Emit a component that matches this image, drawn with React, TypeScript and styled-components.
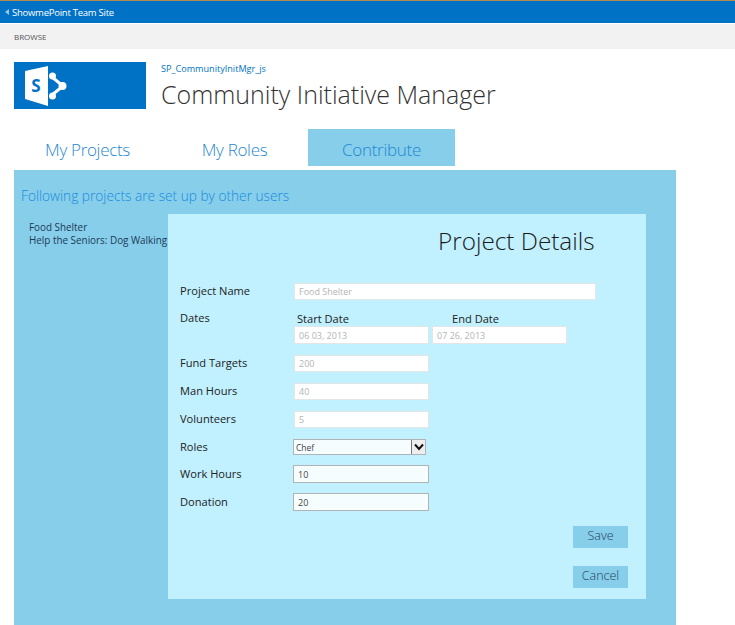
import React from 'react';
import styled, { createGlobalStyle } from 'styled-components';

const GlobalStyle = createGlobalStyle`
	html, body {
		margin: 0;
		padding: 0;
		background: #fff;
	}
	body {
		font-family: 'Open Sans', 'Noto Sans', sans-serif;
		overflow: hidden;
	}
`;

const Page = styled.div`
	width: 735px;
	height: 625px;
	overflow: hidden;
	display: flex;
	flex-direction: column;
`;

const SuiteBar = styled.div`
	height: 22px;
	border-top: 1px solid #b08a50;
	background: #0072c6;
	color: #fff;
	font-size: 9.5px;
	letter-spacing: -0.25px;
	display: flex;
	align-items: center;
	padding-left: 5px;
	gap: 3px;
`;

const BackArrow = styled.span`
	width: 0;
	height: 0;
	border-top: 3px solid transparent;
	border-bottom: 3px solid transparent;
	border-right: 4px solid #9cc6e6;
`;

const RibbonBar = styled.div`
	height: 25px;
	margin-top: 1px;
	background: #f2f2f2;
	color: #555;
	font-size: 8px;
	display: flex;
	align-items: center;
	padding-left: 14px;
`;

const TitleRow = styled.div`
	display: flex;
	margin: 13px 0 0 14px;
	height: 47px;
`;

const Logo = styled.div`
	width: 132px;
	height: 47px;
	background: #0072c6;
	display: flex;
	align-items: center;
	padding-left: 11px;
	box-sizing: border-box;
`;

const TitleText = styled.div`
	margin-left: 15px;
	display: flex;
	flex-direction: column;
`;

const SiteLink = styled.div`
	color: #0072c6;
	font-size: 9.1px;
	line-height: 14px;
`;

const SiteTitle = styled.div`
	color: #333;
	font-size: 25px;
	font-weight: 300;
	line-height: 36px;
	white-space: nowrap;
`;

const Tabs = styled.div`
	display: flex;
	margin: 20px 0 0 14px;
	height: 37px;
`;

const Tab = styled.div<{ $width: number; $active?: boolean }>`
	width: ${p => p.$width}px;
	background: ${p => (p.$active ? '#87ceeb' : 'transparent')};
	color: #1f87d2;
	font-size: 17px;
	letter-spacing: -0.3px;
	font-weight: 300;
	display: flex;
	align-items: center;
	justify-content: center;
	padding-top: 4px;
	box-sizing: border-box;
`;

const MainPanel = styled.div`
	margin: 4px 0 0 14px;
	width: 662px;
	flex: 1;
	background: #87ceeb;
	box-sizing: border-box;
	display: flex;
	flex-direction: column;
`;

const PanelHeading = styled.div`
	color: #1a8bdb;
	font-size: 13.7px;
	font-weight: 300;
	line-height: 20px;
	margin: 16px 0 0 7px;
	height: 28px;
	white-space: nowrap;
`;

const PanelBody = styled.div`
	display: flex;
	height: 385px;
`;

const ProjectList = styled.div`
	width: 154px;
	box-sizing: border-box;
	padding: 7px 0 0 15px;
	color: #1c3a55;
	font-size: 9.9px;
	line-height: 13px;
	white-space: nowrap;
`;

const Details = styled.div`
	width: 478px;
	background: #c1f0ff;
	box-sizing: border-box;
	padding-left: 12px;
	display: flex;
	flex-direction: column;
`;

const DetailsTitle = styled.div`
	color: #1a1a1a;
	font-size: 24.3px;
	font-weight: 300;
	line-height: 34px;
	margin-top: 10px;
	padding-left: 258px;
	white-space: nowrap;
`;

const Row = styled.div<{ $top: number; $height: number }>`
	display: flex;
	align-items: center;
	margin-top: ${p => p.$top}px;
	height: ${p => p.$height}px;
`;

const Label = styled.div<{ $alignTop?: boolean }>`
	width: 114px;
	color: #222;
	font-size: 11.1px;
	white-space: nowrap;
	margin-bottom: 2px;
	${p => p.$alignTop && 'align-self: flex-start; margin-top: -1px;'}
`;

const Field = styled.div<{ $width: number; $editable?: boolean }>`
	width: ${p => p.$width}px;
	height: 100%;
	box-sizing: border-box;
	background: ${p => (p.$editable ? '#f6fdff' : '#fff')};
	border: 1px solid ${p => (p.$editable ? '#b0b4b6' : '#e2e6e8')};
	color: ${p => (p.$editable ? '#444' : '#b4b4b4')};
	font-size: 9px;
	padding-left: 4px;
	display: flex;
	align-items: center;
	${p => p.$editable && 'margin-left: -1px;'}
`;

const DateGroup = styled.div`
	display: flex;
	flex-direction: column;
`;

const DateHeads = styled.div`
	display: flex;
	color: #222;
	font-size: 11.1px;
	line-height: 15px;
	height: 15px;
	padding-left: 3px;
`;

const DateHead = styled.span<{ $width: number }>`
	width: ${p => p.$width}px;
`;

const DateFields = styled.div`
	display: flex;
	gap: 3px;
	height: 18px;
`;

const SelectBox = styled.div`
	width: 133px;
	height: 100%;
	margin-left: -1px;
	box-sizing: border-box;
	background: #f6fdff;
	border: 1px solid #b0b4b6;
	color: #444;
	font-size: 8.5px;
	padding-left: 2px;
	display: flex;
	align-items: center;
	justify-content: space-between;
`;

const SelectArrow = styled.span`
	width: 14px;
	height: 100%;
	box-sizing: border-box;
	background: #eee;
	border-left: 1px solid #777;
	display: flex;
	align-items: center;
	justify-content: center;
`;

const ActionRow = styled.div<{ $top: number }>`
	display: flex;
	justify-content: flex-end;
	margin-top: ${p => p.$top}px;
	padding-right: 18px;
`;

const ActionButton = styled.div`
	width: 55px;
	height: 22px;
	background: #87ceeb;
	color: #24445a;
	font-size: 12.5px;
	font-weight: 300;
	display: flex;
	align-items: center;
	justify-content: center;
	padding-bottom: 3px;
	box-sizing: border-box;
`;

const SharePointMark = () => (
	<svg width="42" height="40" viewBox="0 0 42 40">
		<polygon points="0,5 23,0 23,40 0,33" fill="#fff" />
		<text x="11" y="26" fontFamily="'Open Sans', sans-serif" fontSize="17" fontWeight="700" fill="#0072c6" textAnchor="middle">S</text>
		<path d="M27 11 L38 20 L27 29" fill="none" stroke="#fff" strokeWidth="3" />
		<circle cx="27.5" cy="10" r="3.5" fill="#fff" />
		<circle cx="27.5" cy="30" r="3.5" fill="#fff" />
		<circle cx="37.5" cy="20" r="4" fill="#fff" />
	</svg>
);

const App = () => (
	<Page>
		<GlobalStyle />
		<SuiteBar>
			<BackArrow />
			ShowmePoint Team Site
		</SuiteBar>
		<RibbonBar>BROWSE</RibbonBar>
		<TitleRow>
			<Logo><SharePointMark /></Logo>
			<TitleText>
				<SiteLink>SP_CommunityInitMgr_js</SiteLink>
				<SiteTitle>Community Initiative Manager</SiteTitle>
			</TitleText>
		</TitleRow>
		<Tabs>
			<Tab $width={147}>My Projects</Tab>
			<Tab $width={147}>My Roles</Tab>
			<Tab $width={147} $active>Contribute</Tab>
		</Tabs>
		<MainPanel>
			<PanelHeading>Following projects are set up by other users</PanelHeading>
			<PanelBody>
				<ProjectList>
					<div>Food Shelter</div>
					<div>Help the Seniors: Dog Walking</div>
				</ProjectList>
				<Details>
					<DetailsTitle>Project Details</DetailsTitle>
					<Row $top={25} $height={17}>
						<Label>Project Name</Label>
						<Field $width={302}>Food Shelter</Field>
					</Row>
					<Row $top={11} $height={33}>
						<Label $alignTop>Dates</Label>
						<DateGroup>
							<DateHeads>
								<DateHead $width={155}>Start Date</DateHead>
								<DateHead $width={60}>End Date</DateHead>
							</DateHeads>
							<DateFields>
								<Field $width={135}>06 03, 2013</Field>
								<Field $width={135}>07 26, 2013</Field>
							</DateFields>
						</DateGroup>
					</Row>
					<Row $top={11} $height={17}>
						<Label>Fund Targets</Label>
						<Field $width={135}>200</Field>
					</Row>
					<Row $top={11} $height={17}>
						<Label>Man Hours</Label>
						<Field $width={135}>40</Field>
					</Row>
					<Row $top={11} $height={17}>
						<Label>Volunteers</Label>
						<Field $width={135}>5</Field>
					</Row>
					<Row $top={11} $height={16}>
						<Label>Roles</Label>
						<SelectBox>
							Chef
							<SelectArrow>
								<svg width="10" height="8" viewBox="0 0 10 8">
									<path d="M1 1.5 L5 6 L9 1.5" fill="none" stroke="#111" strokeWidth="2" />
								</svg>
							</SelectArrow>
						</SelectBox>
					</Row>
					<Row $top={10} $height={18}>
						<Label>Work Hours</Label>
						<Field $width={136} $editable>10</Field>
					</Row>
					<Row $top={10} $height={18}>
						<Label>Donation</Label>
						<Field $width={136} $editable>20</Field>
					</Row>
					<ActionRow $top={15}>
						<ActionButton>Save</ActionButton>
					</ActionRow>
					<ActionRow $top={18}>
						<ActionButton>Cancel</ActionButton>
					</ActionRow>
				</Details>
			</PanelBody>
		</MainPanel>
	</Page>
);

export default App;
